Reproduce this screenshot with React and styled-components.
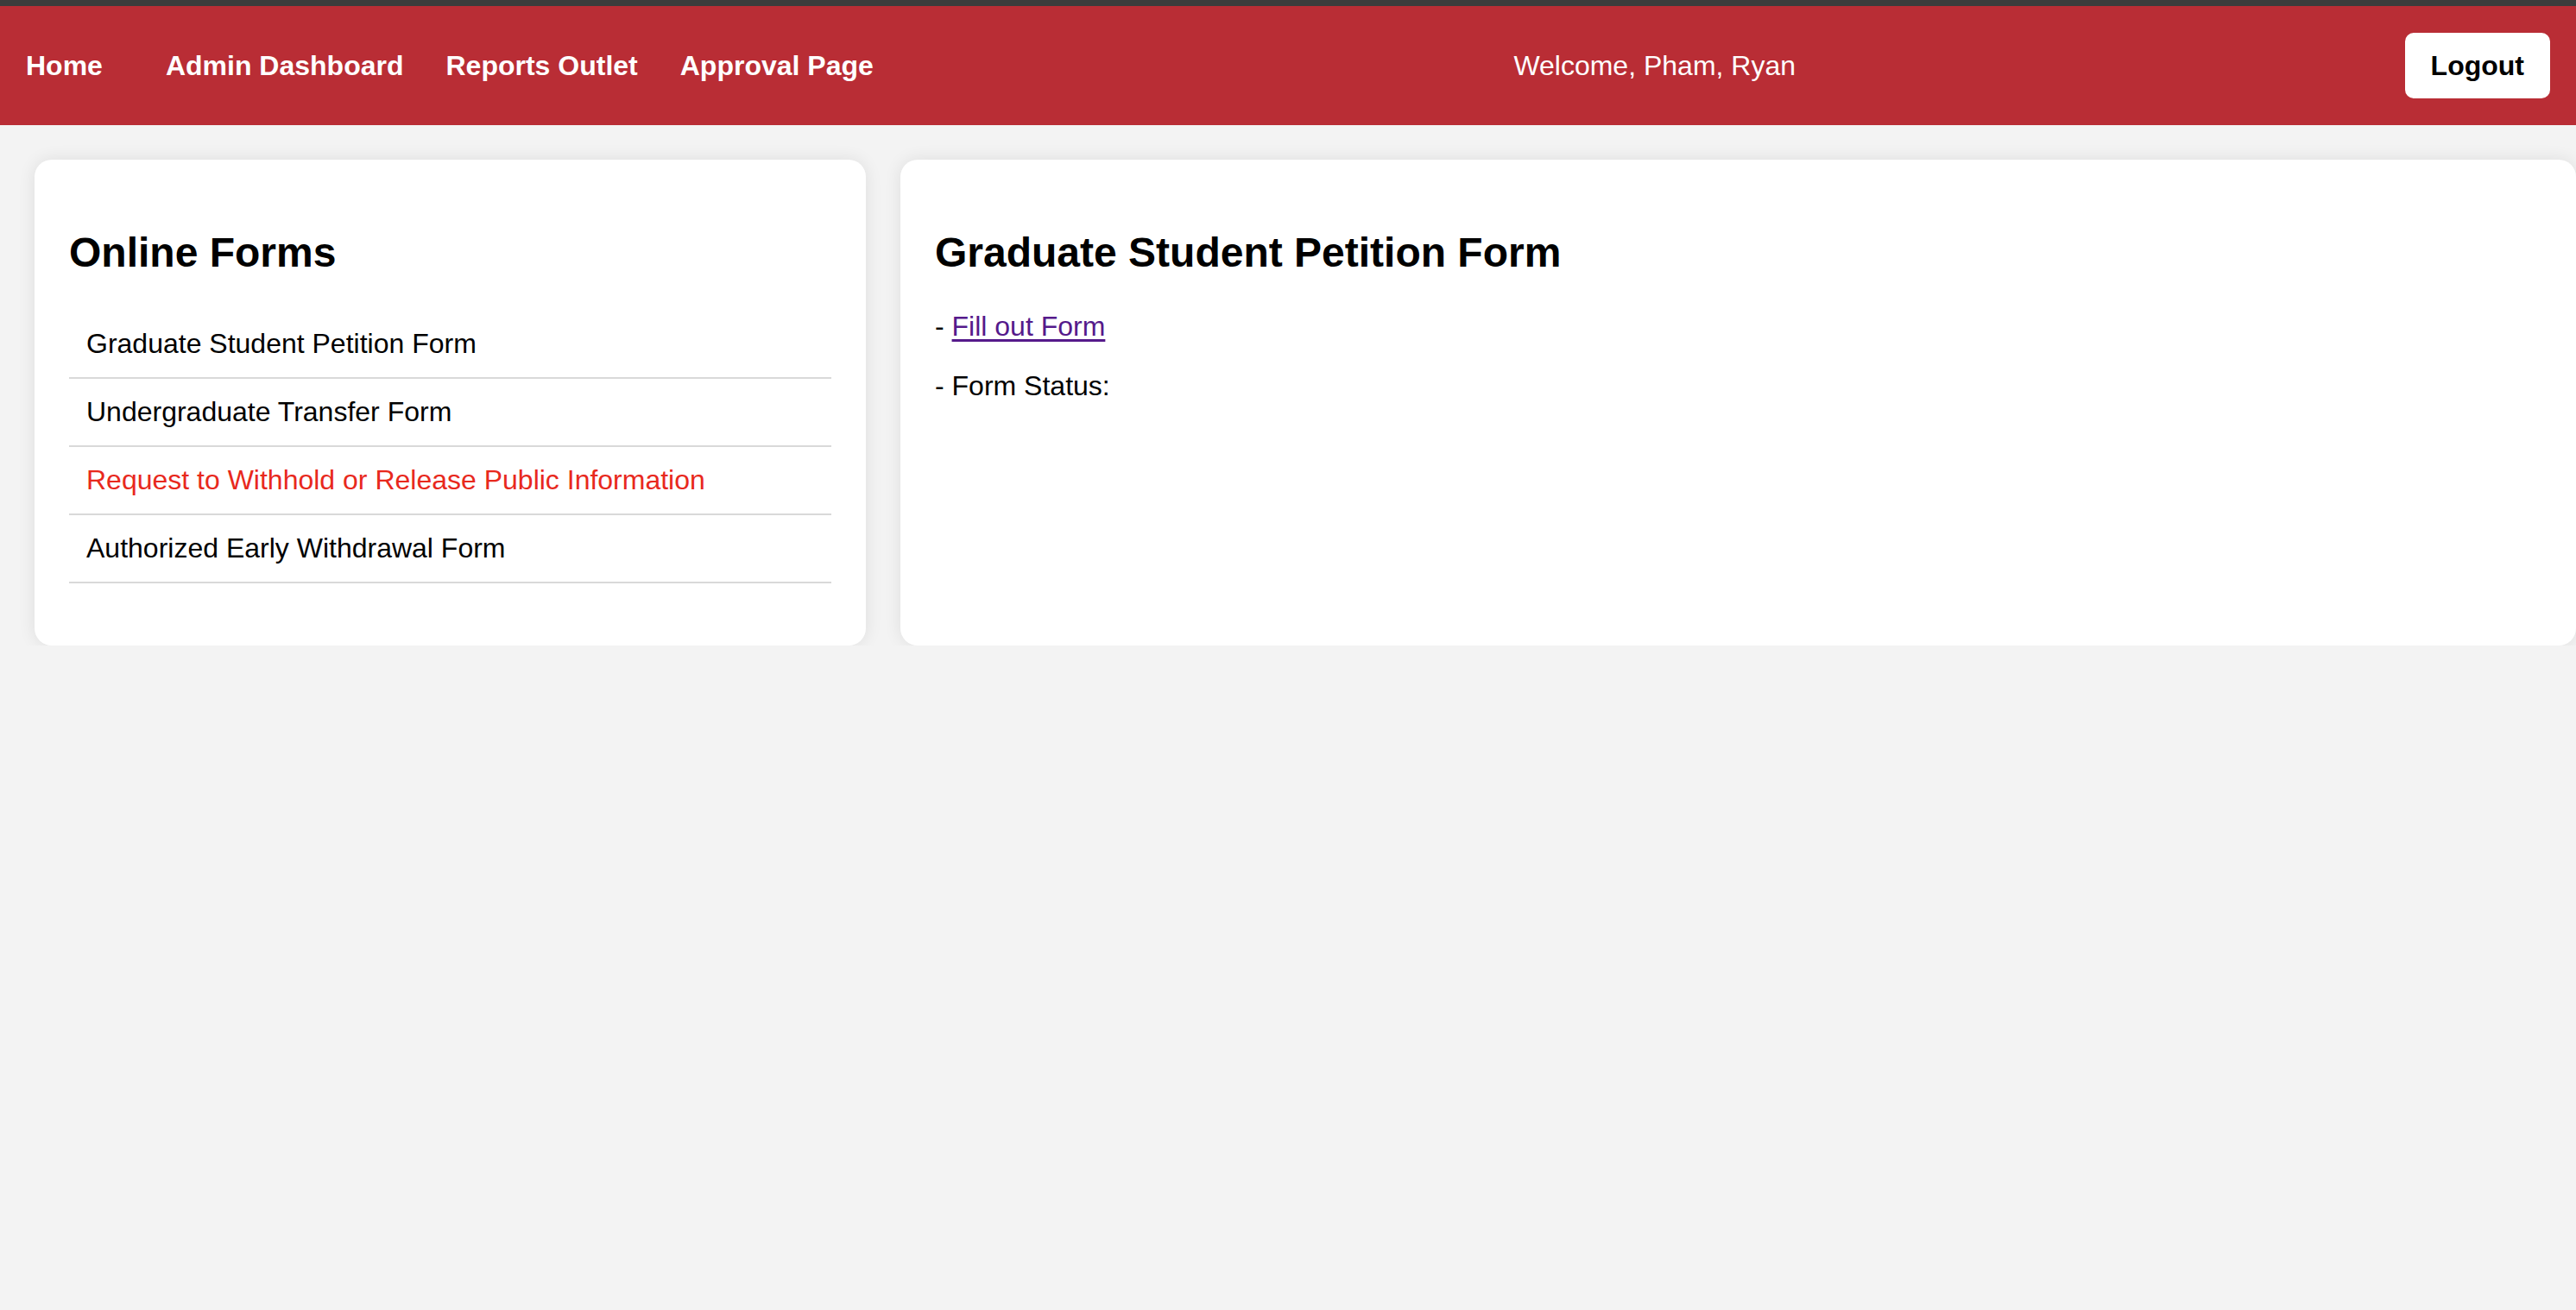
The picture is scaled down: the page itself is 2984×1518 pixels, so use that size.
import React, { useState } from 'react';
import styled, { createGlobalStyle } from 'styled-components';

const GlobalStyle = createGlobalStyle`
  html, body {
    margin: 0;
    padding: 0;
    background: #f3f3f3;
    font-family: "Liberation Sans", Arial, sans-serif;
    overflow: hidden;
  }
`

const TopStrip = styled.div`
  height: 7px;
  background: #3c3c3c;
`

const NavBar = styled.nav`
  display: flex;
  align-items: center;
  justify-content: space-between;
  height: 138px;
  padding: 0 30px 0 30px;
  background: #b92d35;
  color: #fff;
`

const NavLinks = styled.div`
  display: flex;
  align-items: center;
  gap: 49px;
`

const NavLink = styled.a`
  color: #fff;
  font-size: 32px;
  font-weight: bold;
  text-decoration: none;
  margin-right: ${p => p.$home ? '24px' : '0'};
  cursor: pointer;
`

const Welcome = styled.span`
  font-size: 32px;
  margin-left: 36px;
`

const LogoutButton = styled.button`
  height: 76px;
  padding: 0 30px;
  border: none;
  border-radius: 10px;
  background: #fff;
  color: #000;
  font-family: inherit;
  font-size: 32px;
  font-weight: bold;
  cursor: pointer;
`

const Main = styled.main`
  display: grid;
  grid-template-columns: 963px 1941px;
  gap: 40px;
  padding: 40px 0 0 40px;
`

const Card = styled.section`
  background: #fff;
  border-radius: 20px;
  padding: 0 40px;
  box-shadow: 0 0 20px rgba(0, 0, 0, 0.09);
`

const Title = styled.h2`
  font-size: 48px;
  margin: 80px 0 40px;
`

const FormList = styled.ul`
  list-style: none;
  margin: 0 0 72px;
  padding: 0;
`

const FormItem = styled.li`
  padding: 20px;
  font-size: 32px;
  line-height: 37px;
  border-bottom: 2px solid #d9d9d9;
  color: ${p => p.$active ? '#e8291d' : '#000'};
  cursor: pointer;
`

const Line = styled.p`
  font-size: 32px;
  line-height: 37px;
  margin: 0 0 32px;
`

const FormLink = styled.a`
  color: #551a8b;
  text-decoration: underline;
  text-underline-offset: 4px;
  text-decoration-thickness: 3px;
`

const forms = [
  'Graduate Student Petition Form',
  'Undergraduate Transfer Form',
  'Request to Withhold or Release Public Information',
  'Authorized Early Withdrawal Form',
]

const App = () => {

  const [ selected ] = useState(forms[0]);
  const [ hovered, setHovered ] = useState(forms[2]);

  return (
    <>
      <GlobalStyle />
      <TopStrip />
      <NavBar>
        <NavLinks>
          <NavLink $home>Home</NavLink>
          <NavLink>Admin Dashboard</NavLink>
          <NavLink>Reports Outlet</NavLink>
          <NavLink>Approval Page</NavLink>
        </NavLinks>
        <Welcome>Welcome, Pham, Ryan</Welcome>
        <LogoutButton>Logout</LogoutButton>
      </NavBar>
      <Main>
        <Card>
          <Title>Online Forms</Title>
          <FormList>
            {forms.map(form => (
              <FormItem key={form} $active={form === hovered} onMouseEnter={() => setHovered(form)}>
                {form}
              </FormItem>
            ))}
          </FormList>
        </Card>
        <Card>
          <Title>{selected}</Title>
          <Line>- <FormLink href="#">Fill out Form</FormLink></Line>
          <Line>- Form Status:</Line>
        </Card>
      </Main>
    </>
  )

}

export default App;
